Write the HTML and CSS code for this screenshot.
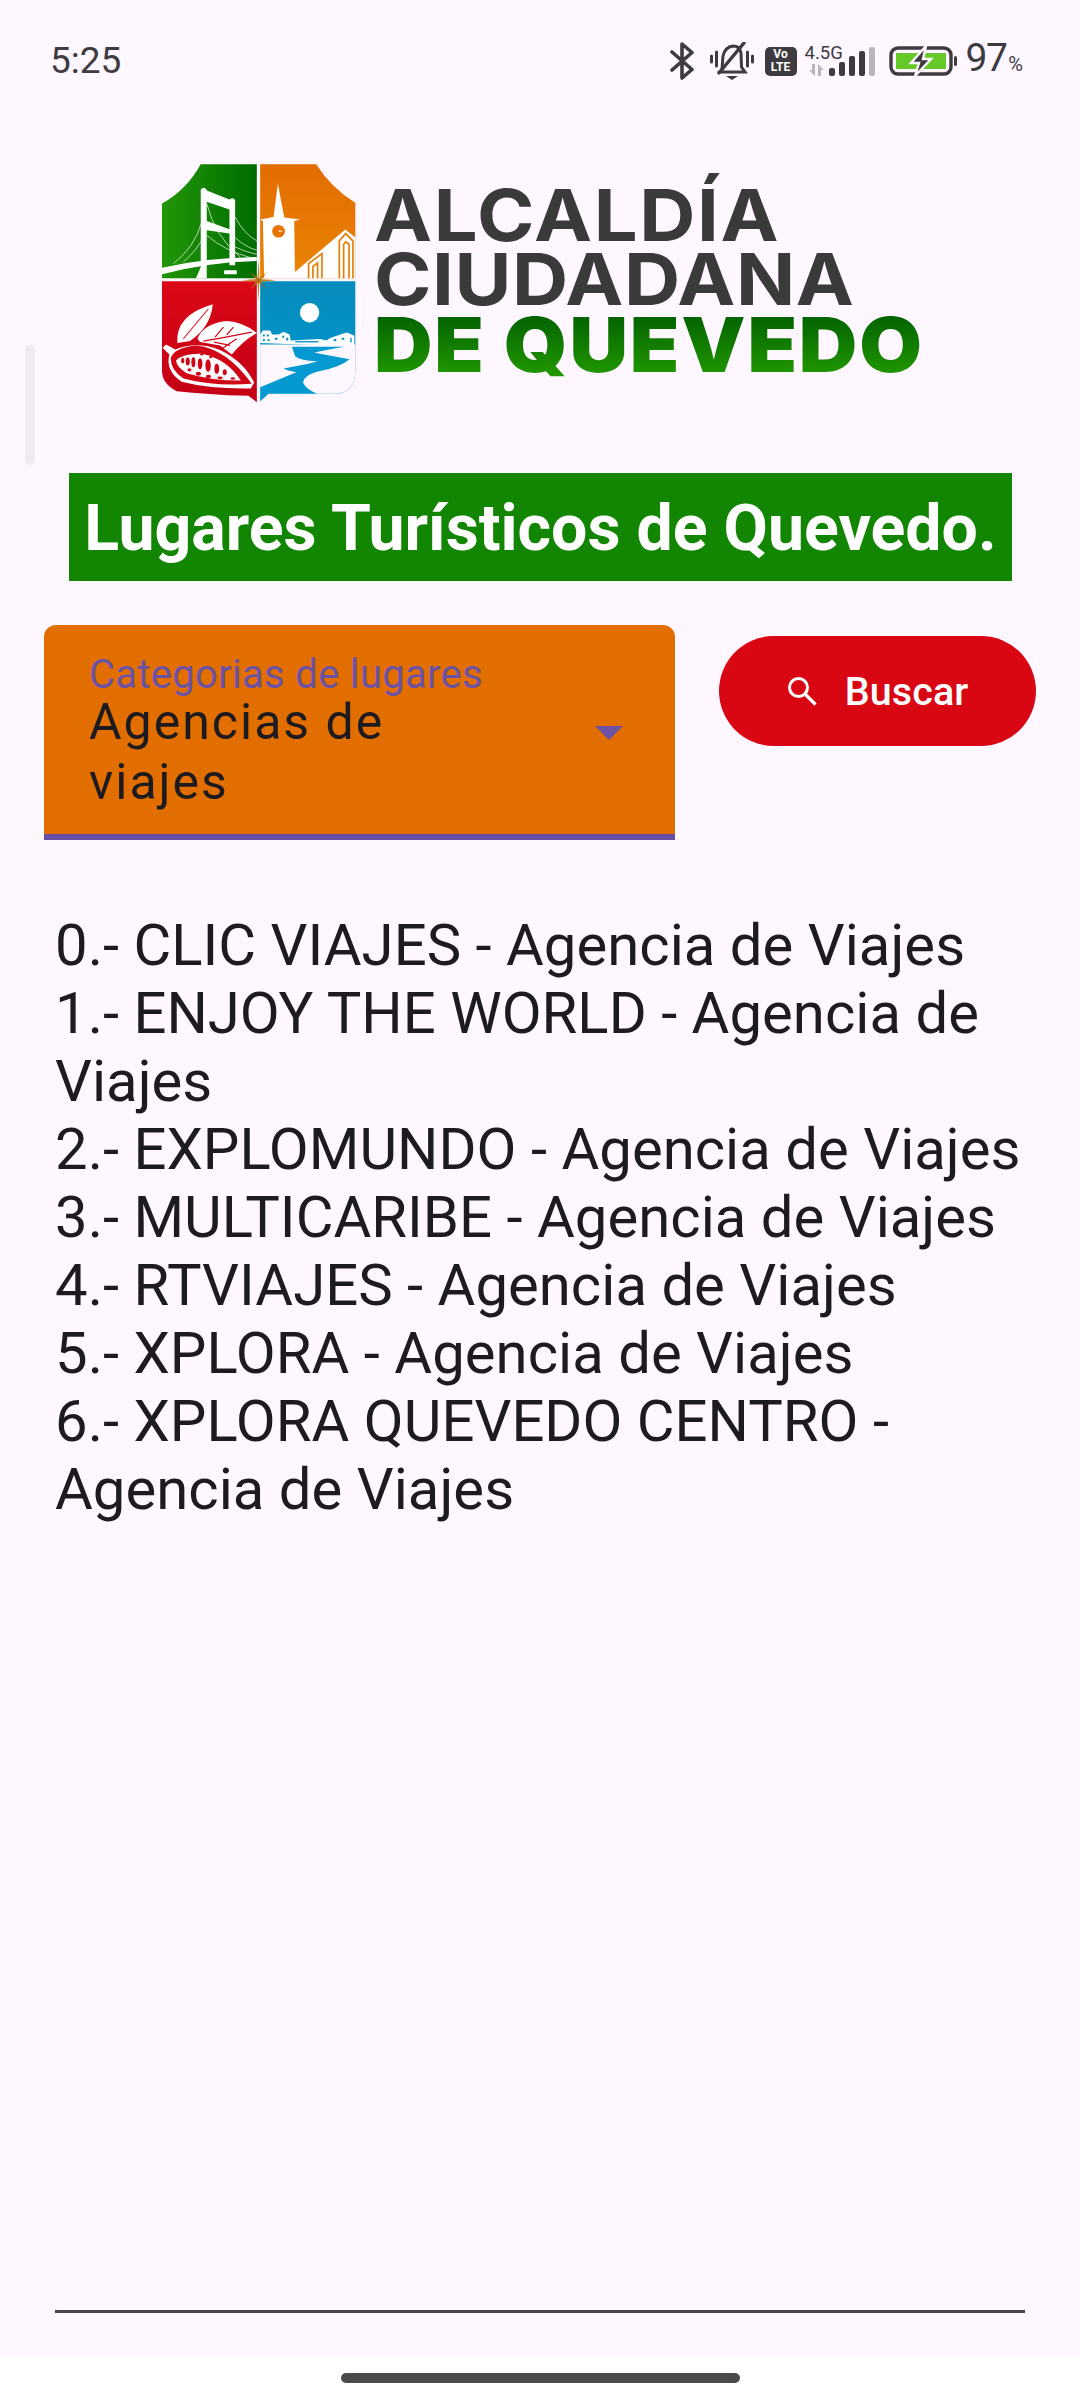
FILE: index.html
```html
<!DOCTYPE html>
<html lang="es">
<head>
    <meta charset="UTF-8">
    <meta name="viewport" content="width=device-width, initial-scale=1.0">
    <title>Lugares Turísticos de Quevedo</title>
    <link rel="stylesheet" href="styles.css">
</head>
<body>
<div class="screen">

    <!-- status bar -->
    <div class="status">
        <span class="time">5:25</span>
        <div class="status-icons">
            <svg class="ic-bt" width="24" height="38" viewBox="0 0 24 38">
                <path d="M2 10 L22 27.5 L12 36 V2 L22 10.5 L2 28" fill="none" stroke="#3d3b3f" stroke-width="3.6" stroke-linejoin="round" stroke-linecap="round"/>
            </svg>
            <svg class="ic-bell" width="44" height="38" viewBox="0 0 44 38">
                <g fill="none" stroke="#3d3b3f" stroke-width="3" stroke-linecap="round">
                    <path d="M1.5 14 V20 M6.5 10 V24 M37.5 10 V24 M42.5 14 V20"/>
                    <path d="M12 27 L13 14 Q15 5 23 4 Q30 4 31 11 L31.5 25 L35 30 H9"/>
                    <path d="M9 31 L34 1" stroke-width="3.4"/>
                </g>
                <path d="M16 34 H28 L22 38 Z" fill="#3d3b3f"/>
            </svg>
            <div class="volte"><span>Vo</span><span>LTE</span></div>
            <div class="net">
                <div class="net-label">
                    <span class="net-type">4.5G</span>
                    <svg width="18" height="12" viewBox="0 0 18 12">
                        <path d="M1 6 H4 V0 H7 V12 Z M10 0 L16 6 H13 V12 H10 Z" fill="#b9b5ba"/>
                    </svg>
                </div>
                <div class="bars">
                    <i class="b1"></i><i class="b2"></i><i class="b3"></i><i class="b4"></i><i class="b5"></i>
                </div>
            </div>
            <svg class="ic-batt" width="68" height="30" viewBox="0 0 68 30">
                <rect x="2" y="2" width="60" height="26" rx="7" fill="none" stroke="#3d3b3f" stroke-width="3.4"/>
                <rect x="65" y="10" width="3" height="10" rx="1.5" fill="#3d3b3f"/>
                <rect x="7" y="7" width="50" height="16" fill="#65c92a"/>
                <path d="M37 0 L22 17 H30 L26 30 L42 13 H34 Z" fill="#3d3b3f" stroke="#fef7ff" stroke-width="2.4"/>
            </svg>
            <span class="pct">97<small>%</small></span>
        </div>
    </div>

    <!-- logo -->
    <div class="logo">
        <svg class="shield" width="197" height="242" viewBox="60 36 590 724">
            <defs>
                <linearGradient id="gGreen" x1="0" x2="1" y1="0" y2="0">
                    <stop offset="0" stop-color="#229608"/><stop offset="1" stop-color="#006c00"/>
                </linearGradient>
                <linearGradient id="gOrange" x1="0" x2="0" y1="0" y2="1">
                    <stop offset="0" stop-color="#e26c00"/><stop offset="1" stop-color="#e98405"/>
                </linearGradient>
                <linearGradient id="gRed" x1="0" x2="0" y1="0" y2="1">
                    <stop offset="0" stop-color="#dc0816"/><stop offset="1" stop-color="#c20016"/>
                </linearGradient>
                <linearGradient id="gBlue" x1="0" x2="0" y1="0" y2="1">
                    <stop offset="0" stop-color="#068bbb"/><stop offset="1" stop-color="#0099d2"/>
                </linearGradient>
            </defs>

            <!-- green: bridge -->
            <path d="M182 42 H350 V384 H66 V160 Q140 118 182 42 Z" fill="url(#gGreen)"/>
            <g fill="none" stroke="#fff" stroke-width="2">
                <path d="M100 340 Q165 290 185 215"/>
                <path d="M130 335 Q175 295 190 260"/>
                <path d="M200 160 Q225 260 300 320"/>
                <path d="M200 255 Q250 300 340 325"/>
                <path d="M285 200 Q310 250 350 272"/>
                <path d="M285 262 Q315 290 350 300"/>
                <path d="M285 290 Q315 305 350 312"/>
            </g>
            <path d="M182 118 Q192 105 202 122 L268 148 Q280 140 285 150 V345 H268 V250 L200 240 V384 H168 L182 350 Z M200 155 V212 L268 237 V178 Z" fill="#fff" fill-rule="evenodd"/>
            <path d="M66 352 Q200 322 350 320 V332 Q200 336 66 372 Z" fill="#fff"/>
            <rect x="252" y="360" width="38" height="12" rx="2" fill="#fff"/>

            <!-- orange: church -->
            <path d="M360 42 H528 Q570 110 645 158 V384 H360 Z" fill="url(#gOrange)"/>
            <path d="M368 212 L360 208 L400 200 L413 100 L432 202 L480 208 L462 212 L464 365 L615 238 L645 262 V384 H372 Z" fill="#fff"/>
            <circle cx="415" cy="243" r="19" fill="#e67400"/>
            <rect x="414" y="241" width="12" height="3" fill="#fff"/>
            <g fill="none" stroke="#e87e04" stroke-width="5">
                <path d="M505 384 V340 L545 310 V384"/>
                <path d="M518 384 V348 L532 338 V384"/>
                <path d="M597 384 V272 L616 250 L638 272 V384"/>
                <path d="M610 384 V282 L616 274 L626 282 V384"/>
            </g>

            <!-- red: cacao -->
            <path d="M66 393 H350 V755 L325 736 Q200 732 110 722 Q66 700 66 660 Z" fill="url(#gRed)"/>
            <path d="M112 578 Q105 495 218 462 Q212 530 150 572 Z" fill="#fff"/>
            <path d="M130 565 L205 475" stroke="#d40815" stroke-width="3" fill="none"/>
            <path d="M172 565 Q190 520 260 512 Q310 515 350 548 Q310 570 275 612 L240 585 L180 575 Z" fill="#fff"/>
            <path d="M190 572 Q260 560 335 545 M225 560 L250 530 M260 553 L280 530 M222 575 L270 585 M245 595 L290 565" stroke="#d40815" stroke-width="3.5" fill="none"/>
            <path d="M68 592 L78 582 L106 597 Q170 572 238 598 Q310 632 342 696 L332 714 Q210 716 125 694 Q75 660 88 612 Z" fill="#fff"/>
            <path d="M92 622 Q105 590 170 585 Q260 595 335 700 Q220 708 130 684 Q92 660 92 622 Z" fill="#d00616"/>
            <path d="M108 630 Q130 608 185 610 Q260 625 302 690 Q210 690 140 668 Q110 650 108 630 Z" fill="#fff"/>
            <g fill="#d00616">
                <ellipse cx="128" cy="630" rx="5" ry="8"/><ellipse cx="143" cy="633" rx="6" ry="12"/>
                <ellipse cx="160" cy="635" rx="6" ry="15"/><ellipse cx="180" cy="640" rx="7" ry="17"/>
                <ellipse cx="204" cy="645" rx="8" ry="19"/><ellipse cx="230" cy="655" rx="7" ry="15"/>
                <ellipse cx="254" cy="665" rx="6" ry="9"/><ellipse cx="148" cy="658" rx="6" ry="5"/>
                <ellipse cx="175" cy="670" rx="8" ry="6"/><ellipse cx="205" cy="678" rx="8" ry="5"/>
                <ellipse cx="240" cy="682" rx="8" ry="4"/><ellipse cx="278" cy="684" rx="7" ry="4"/>
                <ellipse cx="185" cy="612" rx="5" ry="3"/><ellipse cx="212" cy="620" rx="5" ry="3"/>
            </g>

            <!-- blue: river -->
            <path d="M360 393 H645 V660 Q645 725 590 730 H385 L360 752 Z" fill="url(#gBlue)"/>
            <circle cx="508" cy="487" r="29" fill="#fff"/>
            <path d="M360 578 V552 L368 540 H390 L396 552 H415 L430 544 L448 552 L452 570 L540 566 L558 570 L572 562 L600 552 L620 546 L642 556 V588 Z" fill="#fff"/>
            <g fill="#068fc2">
                <rect x="368" y="552" width="6" height="6"/><rect x="380" y="552" width="6" height="6"/>
                <rect x="368" y="566" width="6" height="6"/><rect x="382" y="566" width="6" height="6"/>
                <rect x="404" y="562" width="8" height="6"/><rect x="426" y="556" width="6" height="6"/>
                <rect x="438" y="562" width="6" height="8"/><rect x="465" y="572" width="70" height="4"/>
                <rect x="580" y="566" width="8" height="6"/><rect x="604" y="562" width="8" height="6"/>
                <rect x="630" y="562" width="4" height="14"/>
            </g>
            <path d="M360 582 H645 V660 Q645 724 590 730 H385 L360 752 Z" fill="#fef7ff"/>
            <path d="M455 589 H612 Q570 596 522 606 Q560 614 628 626 Q600 650 530 664 Q490 676 488 696 Q498 716 530 730 H385 L360 752 V710 L468 665 Q440 660 430 654 L505 640 L532 632 Q480 630 465 618 Z" fill="#0499d0"/>

            <!-- star -->
            <path d="M355 328 L358 386 L410 390 L358 394 L355 452 L352 394 L304 390 L352 386 Z" fill="#c8841a"/>
            <path d="M329 364 L357 386 L381 364 L359 391 L381 418 L356 395 L329 418 L351 390 Z" fill="#b06c0c"/>
        </svg>
        <div class="logo-text">
            <span class="logo-line">ALCALDÍA</span>
            <span class="logo-line logo-mid">CIUDADANA</span>
            <span class="logo-line logo-green">DE QUEVEDO</span>
        </div>
    </div>

    <h1 class="banner">Lugares Turísticos de Quevedo.</h1>

    <div class="controls">
        <div class="select">
            <div class="select-text">
                <span class="select-label">Categorias de lugares</span>
                <span class="select-value">Agencias de viajes</span>
            </div>
            <span class="select-arrow"></span>
        </div>
        <button class="search-btn" type="button">
            <svg width="30" height="30" viewBox="0 0 30 30">
                <circle cx="11.5" cy="11.5" r="9" fill="none" stroke="#fff" stroke-width="3"/>
                <path d="M18 18 L28.5 28.5" stroke="#fff" stroke-width="3.2"/>
            </svg>
            Buscar
        </button>
    </div>

    <div class="results">
        <p>0.- CLIC VIAJES - Agencia de Viajes</p>
        <p>1.- ENJOY THE WORLD - Agencia de Viajes</p>
        <p>2.- EXPLOMUNDO - Agencia de Viajes</p>
        <p>3.- MULTICARIBE - Agencia de Viajes</p>
        <p>4.- RTVIAJES - Agencia de Viajes</p>
        <p>5.- XPLORA - Agencia de Viajes</p>
        <p>6.- XPLORA QUEVEDO CENTRO - Agencia de Viajes</p>
    </div>

    <hr class="divider">

    <div class="nav"><div class="handle"></div></div>

    <div class="scroll-thumb"></div>
</div>
</body>
</html>
```

FILE: styles.css
```css
body {
    margin: 0;
    background-color: #fef7ff;
    font-family: Roboto, sans-serif;
    color: #1d1b20;
}

.screen {
    position: relative;
    height: 2400px;
    display: flex;
    flex-direction: column;
    overflow: hidden;
}

/* status bar */
.status {
    height: 120px;
    padding: 41px 57px 0 50px;
    box-sizing: border-box;
    display: flex;
    justify-content: space-between;
    align-items: flex-start;
    color: #3d3b3f;
}

.time {
    font-size: 37px;
    line-height: 40px;
}

.status-icons {
    display: flex;
    align-items: center;
    height: 40px;
}

.ic-bell {
    margin-left: 16px;
}

.volte {
    margin-left: 11px;
    width: 32px;
    height: 29px;
    background-color: #3d3b3f;
    border-radius: 5px;
    color: #fff;
    font-size: 12px;
    font-weight: 700;
    line-height: 13px;
    display: flex;
    flex-direction: column;
    align-items: center;
    justify-content: center;
}

.net {
    margin-left: 8px;
    position: relative;
    width: 70px;
    height: 29px;
    display: flex;
    justify-content: flex-end;
    align-items: flex-end;
}

.net-label {
    position: absolute;
    left: 0;
    top: -2px;
    display: flex;
    flex-direction: column;
    gap: 3px;
}

.net-label svg {
    margin-left: 3px;
}

.net-type {
    font-size: 18.5px;
    line-height: 16px;
}

.bars {
    display: flex;
    align-items: flex-end;
    gap: 4px;
}

.bars i {
    display: block;
    width: 6px;
    border-radius: 2px;
    background-color: #3d3b3f;
}

.b1 { height: 8px; }
.b2 { height: 14px; }
.b3 { height: 20px; }
.b4 { height: 25px; }
.bars .b5 { height: 29px; background-color: #b9b5ba; }

.ic-batt {
    margin-left: 14px;
}

.pct {
    margin-left: 9px;
    font-size: 39px;
    line-height: 40px;
    letter-spacing: -1.5px;
}

.pct small {
    font-size: 20px;
    margin-left: 2px;
    letter-spacing: 0;
}

/* logo */
.logo {
    height: 242px;
    margin: 42px 0 0 160px;
    display: flex;
    align-items: center;
    gap: 17px;
}

.shield {
    flex: none;
}

.logo-text {
    display: flex;
    flex-direction: column;
    padding-bottom: 4px;
    font-family: Inter, sans-serif;
    font-weight: 700;
    color: #3a3a3a;
    font-size: 72px;
    line-height: 64px;
    transform: scaleX(1.08);
    transform-origin: left center;
}

.logo-line {
    letter-spacing: 1.5px;
    white-space: nowrap;
}

.logo-mid {
    letter-spacing: 0.5px;
}

.logo-green {
    font-weight: 900;
    font-size: 75px;
    line-height: 68px;
    letter-spacing: 1.7px;
    background: linear-gradient(#005f00, #229a00);
    -webkit-background-clip: text;
    background-clip: text;
    color: transparent;
}

.banner {
    margin: 69px 68px 0 69px;
    height: 108px;
    background-color: #128502;
    color: #fff;
    font-size: 64.4px;
    font-weight: 700;
    line-height: 110px;
    text-align: center;
    white-space: nowrap;
}

.controls {
    margin: 44px 44px 0 44px;
    display: flex;
    align-items: flex-start;
    gap: 44px;
}

.select {
    width: 631px;
    height: 215px;
    box-sizing: border-box;
    background-color: #e36e00;
    border-bottom: 6px solid #6750a4;
    border-radius: 12px 12px 0 0;
    padding: 32px 46px 0 45px;
    display: flex;
    align-items: flex-start;
    justify-content: space-between;
}

.select-text {
    width: 400px;
    display: flex;
    flex-direction: column;
}

.select-label {
    color: #6b52a5;
    font-size: 40px;
    line-height: 35px;
    letter-spacing: 0.3px;
    white-space: nowrap;
}

.select-value {
    font-size: 50px;
    line-height: 60px;
    letter-spacing: 2px;
}

.select-arrow {
    width: 0;
    height: 0;
    margin: 69px 6px 0 0;
    border-left: 14px solid transparent;
    border-right: 14px solid transparent;
    border-top: 14px solid #6b52a5;
}

.search-btn {
    margin-top: 11px;
    width: 317px;
    height: 110px;
    border: none;
    border-radius: 55px;
    background-color: #d90713;
    color: #fff;
    font-family: Roboto, sans-serif;
    font-size: 39.5px;
    font-weight: 500;
    letter-spacing: 0.1px;
    display: flex;
    align-items: center;
    justify-content: center;
    gap: 28px;
    padding: 0;
    cursor: pointer;
}

.results {
    margin: 71px 56px 0 55px;
    flex: 1;
    font-size: 58px;
    line-height: 68px;
    letter-spacing: 0.03px;
}

.results p {
    margin: 0;
}

.divider {
    margin: 0 55px 43px 55px;
    height: 3px;
    border: none;
    background-color: #49454f;
}

.nav {
    height: 44px;
    background-color: #fff;
    display: flex;
    justify-content: center;
    padding-top: 17px;
    box-sizing: border-box;
}

.handle {
    width: 399px;
    height: 10px;
    border-radius: 5px;
    background-color: #4a4a4a;
}

/* sits on top of the page */
.scroll-thumb {
    position: absolute;
    left: 25px;
    top: 345px;
    width: 10px;
    height: 120px;
    border-radius: 5px;
    background-color: #efebf0;
}
```
